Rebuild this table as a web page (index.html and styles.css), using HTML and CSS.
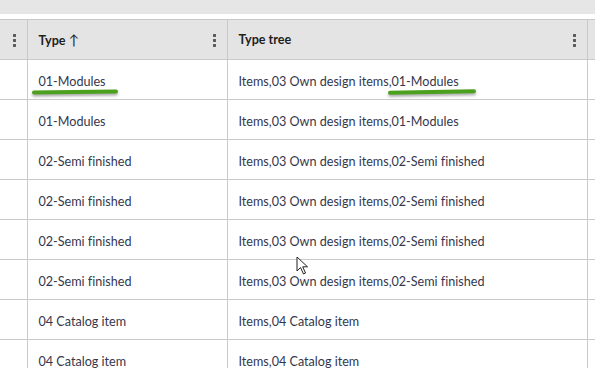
FILE: index.html
```html
<!DOCTYPE html>
<html lang="en">
<head>
    <meta charset="UTF-8">
    <title>Items by type</title>
    <link rel="stylesheet" href="styles.css">
</head>
<body>
    <div class="toolbar"></div>
    <div class="grid-wrap">
        <table class="grid">
            <colgroup>
                <col class="c-sel">
                <col class="c-type">
                <col class="c-tree">
                <col class="c-rest">
            </colgroup>
            <thead>
                <tr>
                    <th><span class="menu"></span></th>
                    <th><span class="label">Type <span class="arrow">&#8593;</span></span><span class="menu"></span></th>
                    <th><span class="label">Type tree</span><span class="menu"></span></th>
                    <th></th>
                </tr>
            </thead>
            <tbody>
                <tr><td></td><td>01-Modules</td><td>Items,03 Own design items,01-Modules</td><td></td></tr>
                <tr><td></td><td>01-Modules</td><td>Items,03 Own design items,01-Modules</td><td></td></tr>
                <tr><td></td><td>02-Semi finished</td><td>Items,03 Own design items,02-Semi finished</td><td></td></tr>
                <tr><td></td><td>02-Semi finished</td><td>Items,03 Own design items,02-Semi finished</td><td></td></tr>
                <tr><td></td><td>02-Semi finished</td><td>Items,03 Own design items,02-Semi finished</td><td></td></tr>
                <tr><td></td><td>02-Semi finished</td><td>Items,03 Own design items,02-Semi finished</td><td></td></tr>
                <tr><td></td><td>04 Catalog item</td><td>Items,04 Catalog item</td><td></td></tr>
                <tr><td></td><td>04 Catalog item</td><td>Items,04 Catalog item</td><td></td></tr>
            </tbody>
        </table>

        <!-- hand drawn highlights -->
        <div class="mark mark-type"></div>
        <div class="mark mark-tree"></div>

        <svg class="cursor" width="14" height="20" viewBox="0 0 14 20">
            <path d="M1 1 L1 15 L4.5 11.5 L7.5 18 L9.5 17 L6.7 10.8 L11.5 10.8 Z" fill="#fff" stroke="#222" stroke-width="1" stroke-linejoin="round"/>
        </svg>
    </div>
</body>
</html>
```

FILE: styles.css
```css
body {
    margin: 0;
    background: #fff;
    font-family: Lato, 'Open Sans', Arial, sans-serif;
    font-variant-ligatures: none;
    width: 595px;
    height: 368px;
    overflow: hidden;
}
.toolbar {
    height: 14px;
    background-color: #e6e6e6;
    margin-bottom: 5px;
}
.grid-wrap {
    position: relative;
}
.grid {
    border-collapse: collapse;
    table-layout: fixed;
    width: 620px;
}
.c-sel { width: 27px; }
.c-type { width: 200px; }
.c-tree { width: 360px; }
.grid th,
.grid td {
    border: 1px solid #c9c9c9;
    padding: 0 0 0 11px;
    height: 40px;
    box-sizing: border-box;
    text-align: left;
    white-space: nowrap;
    overflow: hidden;
}
.grid tr > :first-child {
    border-left: none;
}
.grid th {
    background-color: #e4e4e4;
    font-size: 12.6px;
    font-weight: 700;
    color: #1f1f1f;
    position: relative;
}
.grid th:first-child {
    padding: 0;
}
.grid td {
    font-size: 12.6px;
    color: #34374d;
    padding-top: 3px;
}
.arrow {
    font-weight: 400;
    font-size: 14px;
}
.menu {
    position: absolute;
    right: 11px;
    top: 13px;
    width: 3px;
    height: 14px;
    background: radial-gradient(circle, #5a5a5a 1.4px, transparent 1.6px) 0 0 / 3px 5px repeat-y;
}
.mark {
    position: absolute;
    height: 4px;
    border-radius: 3px;
    background-color: #4ba01d;
    box-shadow: 0 2px 3px rgba(0, 0, 0, 0.35);
}
.mark-type {
    left: 32px;
    top: 71px;
    width: 86px;
    transform: rotate(-0.7deg);
}
.mark-tree {
    left: 388px;
    top: 71px;
    width: 88px;
    transform: rotate(-1deg);
}
.cursor {
    position: absolute;
    left: 296px;
    top: 237px;
}
```
